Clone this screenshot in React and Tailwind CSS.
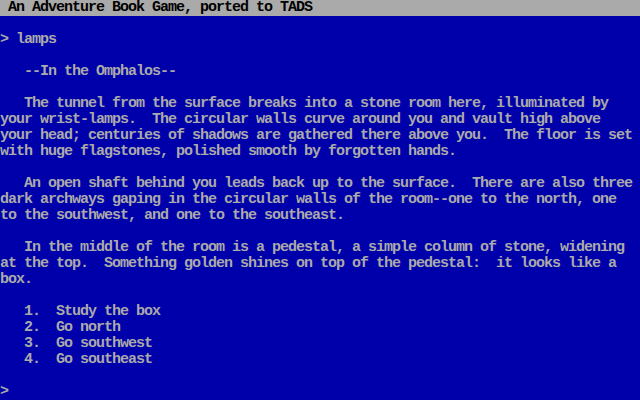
const lines = [
  '',
  '> lamps',
  '',
  '   --In the Omphalos--',
  '',
  '   The tunnel from the surface breaks into a stone room here, illuminated by',
  'your wrist-lamps.  The circular walls curve around you and vault high above',
  'your head; centuries of shadows are gathered there above you.  The floor is set',
  'with huge flagstones, polished smooth by forgotten hands.',
  '',
  '   An open shaft behind you leads back up to the surface.  There are also three',
  'dark archways gaping in the circular walls of the room--one to the north, one',
  'to the southwest, and one to the southeast.',
  '',
  '   In the middle of the room is a pedestal, a simple column of stone, widening',
  'at the top.  Something golden shines on top of the pedestal:  it looks like a',
  'box.',
  '',
  '   1.  Study the box',
  '   2.  Go north',
  '   3.  Go southwest',
  '   4.  Go southeast',
  '',
  '>',
]

export default function App() {
  return (
    <div className="h-[400px] w-[640px] overflow-hidden bg-[#0000aa] font-['Liberation_Mono',monospace] text-[15px] font-bold leading-4 tracking-[-1px] text-[#aaaaaa] whitespace-pre">
      <div className="h-4 bg-[#aaaaaa] text-black"> An Adventure Book Game, ported to TADS</div>
      {lines.map((l, i) => (
        <div key={i} className="h-4">{l}</div>
      ))}
    </div>
  )
}
